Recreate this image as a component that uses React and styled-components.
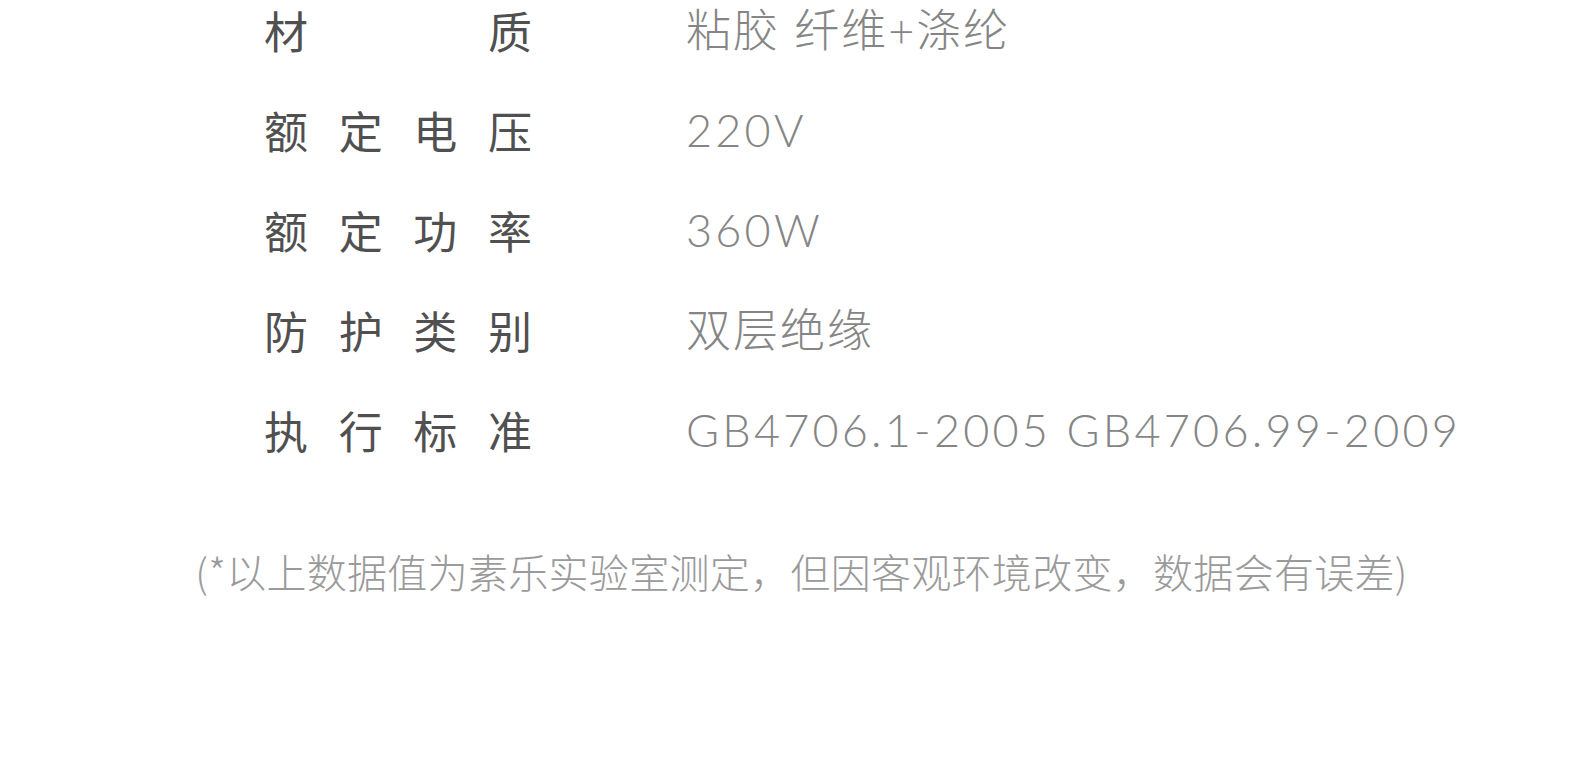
import React from 'react';
import styled, { createGlobalStyle } from 'styled-components';

const GlobalStyle = createGlobalStyle`
  html, body {
    margin: 0;
    padding: 0;
    background: #fff;
  }
  body {
    font-family: 'Noto Sans CJK SC', sans-serif;
    overflow: hidden;
  }
`;

const Page = styled.div`
  width: 1581px;
  height: 782px;
  background: #fff;
  overflow: hidden;
`;

const SpecList = styled.div`
  display: flex;
  flex-direction: column;
  margin-top: -20px;
  padding-left: 264px;
`;

const SpecRow = styled.div`
  display: grid;
  grid-template-columns: 268px 1fr;
  column-gap: 154px;
  align-items: center;
  height: 100px;
`;

const Label = styled.div`
  font-size: 44px;
  color: #505050;
  text-align: justify;
  text-align-last: justify;
  line-height: 1;
`;

const Value = styled.div`
  font-family: 'Lato', 'Noto Sans CJK SC', sans-serif;
  font-size: 45px;
  font-weight: 300;
  letter-spacing: ${(p) => (p.$latin ? '3.2px' : '2px')};
  color: #858585;
  line-height: 1;
  white-space: nowrap;
`;

const Note = styled.p`
  margin: 71px 0 0;
  padding-left: 22px;
  text-align: center;
  font-size: 40px;
  font-weight: 300;
  letter-spacing: 0.3px;
  color: #9a9a9a;
  line-height: 1;
`;

const specs = [
  ['材质', '粘胶 纤维+涤纶', false],
  ['额定电压', '220V', true],
  ['额定功率', '360W', true],
  ['防护类别', '双层绝缘', false],
  ['执行标准', 'GB4706.1-2005 GB4706.99-2009', true],
];

export default function App() {
  return (
    <Page>
      <GlobalStyle />
      <SpecList>
        {specs.map(([label, value, latin]) => (
          <SpecRow key={label}>
            <Label>{label}</Label>
            <Value $latin={latin}>{value}</Value>
          </SpecRow>
        ))}
      </SpecList>
      <Note>(*以上数据值为素乐实验室测定，但因客观环境改变，数据会有误差)</Note>
    </Page>
  );
}
